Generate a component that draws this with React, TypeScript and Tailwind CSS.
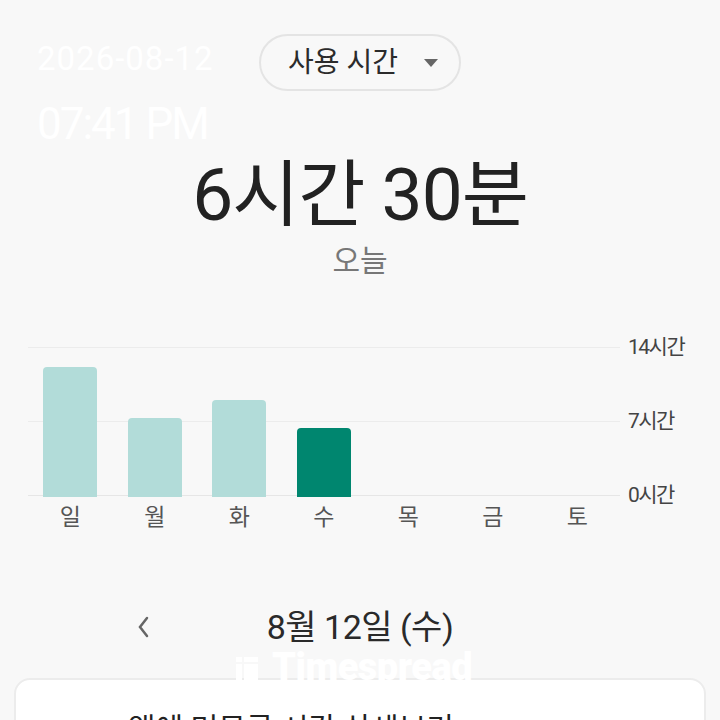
import React from 'react';

const days = ['일', '월', '화', '수', '목', '금', '토'];
// hours per day, null when the day hasn't come yet
const hours: (number | null)[] = [12.3, 7.5, 9.2, 6.5, null, null, null];
const today = 3;

function Chart() {
  const plotH = 148;
  return (
    <div className="mt-[66px] flex pl-[28px]">
      <div className="w-[592px]">
        <div className="relative h-[150px]">
          <div className="flex h-[149px] flex-col justify-between">
            <div className="h-px bg-[#ececec]" />
            <div className="h-px bg-[#ececec]" />
            <div className="h-px bg-[#e6e6e6]" />
          </div>
          <div className="absolute inset-0 flex items-end">
            {hours.map((h, i) => (
              <div key={i} className="flex w-[84.5px] justify-center">
                {h !== null && (
                  <div
                    className={`w-[54px] rounded-t-[4px] ${i === today ? 'bg-[#00866f]' : 'bg-[#b2dcd9]'}`}
                    style={{ height: Math.round((h / 14) * plotH) }}
                  />
                )}
              </div>
            ))}
          </div>
        </div>
        <div className="flex">
          {days.map((d) => (
            <div key={d} className="w-[84.5px] text-center text-[23px] leading-[42px] text-[#555]">
              {d}
            </div>
          ))}
        </div>
      </div>
      <div className="ml-[8px] flex h-[149px] flex-col justify-between text-[21px] leading-none tracking-[-1.5px] text-[#444]">
        <span className="-mt-[10px]">14시간</span>
        <span>7시간</span>
        <span className="-mb-[10px]">0시간</span>
      </div>
    </div>
  );
}

export default function App() {
  return (
    <div
      className="relative h-[720px] w-[720px] overflow-hidden bg-[#f8f8f8]"
      style={{ fontFamily: 'Roboto, "Noto Sans CJK KR", sans-serif' }}
    >
      {/* timestamp overlay */}
      <div className="absolute left-[37px] top-[38px] text-white">
        <div className="text-[33px] leading-[42px] tracking-[1px]">2026-08-12</div>
        <div className="mt-[20px] text-[44px] leading-[48px] tracking-[-2px]">07:41 PM</div>
      </div>

      <div className="flex flex-col items-center pt-[34px]">
        <div className="flex h-[57px] items-center gap-[26px] rounded-full border-2 border-[#e4e4e4] pl-[27px] pr-[21px]">
          <span className="text-[28px] text-[#2b2b2b]">사용 시간</span>
          <svg width="14" height="8" viewBox="0 0 14 8">
            <path d="M0 0h14L7 8z" fill="#666" />
          </svg>
        </div>
        <div className="mt-[62px] text-[73px] leading-[84px] tracking-[-1px] text-[#222]">
          6시간 30분
        </div>
        <div className="mt-[4px] text-[30px] leading-[40px] text-[#777]">오늘</div>
      </div>

      <Chart />

      <div className="relative mt-[63px] flex h-[50px] items-center justify-center">
        <svg className="absolute left-[136px]" width="14" height="24" viewBox="0 0 14 24">
          <path d="M11 3L4 12l7 9" fill="none" stroke="#666" strokeWidth="2.5" strokeLinecap="round" />
        </svg>
        <span className="text-[34px] tracking-[-0.5px] text-[#2a2a2a]">8월 12일 (수)</span>
      </div>

      <div className="mx-[14px] mt-[26px] h-[200px] rounded-[16px] border-2 border-[#ececec] bg-white pl-[112px] pt-[26px]">
        <span className="text-[30px] text-[#222]">앱에 머무른 시간 상세보기</span>
      </div>

      {/* watermark */}
      <div className="absolute left-[236px] top-[648px] flex items-center gap-[14px] text-white">
        <svg width="22" height="28" viewBox="0 0 22 28">
          <rect x="0" y="4" width="6" height="5" fill="white" />
          <rect x="8" y="4" width="14" height="5" fill="white" />
          <rect x="0" y="11" width="6" height="17" fill="white" />
          <rect x="8" y="11" width="14" height="17" fill="white" />
        </svg>
        <span className="text-[38px] font-black leading-none tracking-[-0.5px]">Timespread</span>
      </div>
    </div>
  );
}
